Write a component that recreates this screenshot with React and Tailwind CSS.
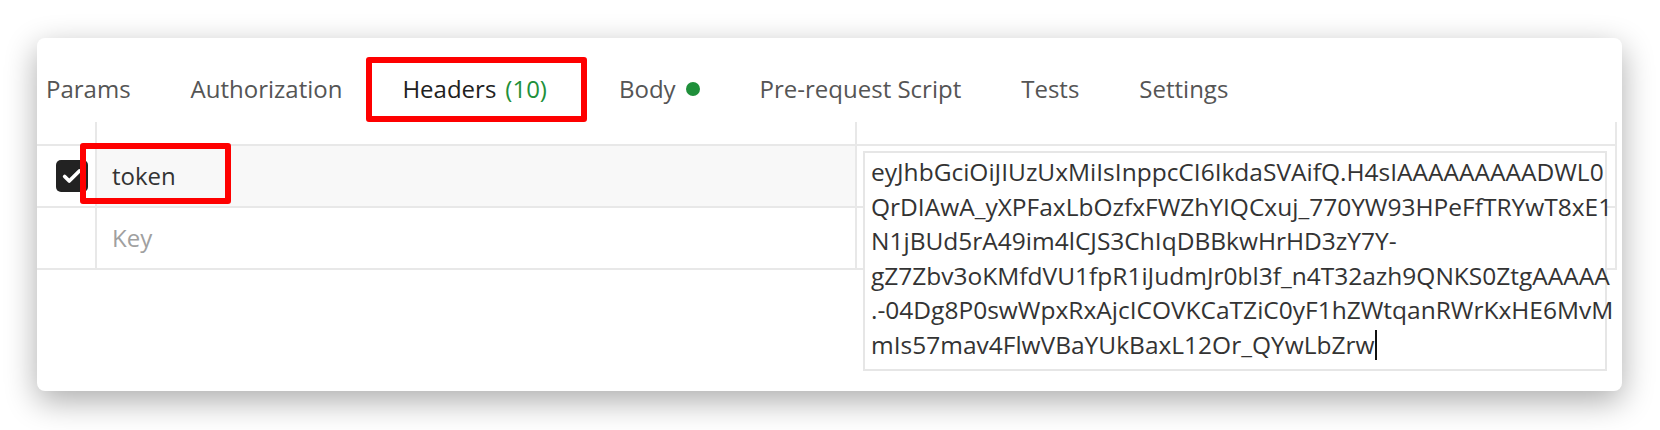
import { useState } from 'react';

const tabs = [
  { name: 'Params' },
  { name: 'Authorization' },
  { name: 'Headers', count: '(10)', active: true },
  { name: 'Body', dot: true },
  { name: 'Pre-request Script' },
  { name: 'Tests' },
  { name: 'Settings' },
];

const tokenLines = [
  'eyJhbGciOiJIUzUxMiIsInppcCI6IkdaSVAifQ.H4sIAAAAAAAAADWL0',
  'QrDIAwA_yXPFaxLbOzfxFWZhYIQCxuj_770YW93HPeFfTRYwT8xE1',
  'N1jBUd5rA49im4lCJS3ChIqDBBkwHrHD3zY7Y-',
  'gZ7Zbv3oKMfdVU1fpR1iJudmJr0bl3f_n4T32azh9QNKS0ZtgAAAAA',
  '.-04Dg8P0swWpxRxAjcICOVKCaTZiC0yF1hZWtqanRWrKxHE6MvM',
  'mIs57mav4FlwVBaYUkBaxL12Or_QYwLbZrw',
];

function Tab({ tab }) {
  return (
    <div
      className={`relative h-[60px] flex items-center pt-[2px] border-b-4 ${
        tab.active ? 'border-[#e8542c] pl-[30px] pr-[34px] mr-[8px]' : 'border-transparent px-[30px]'
      }`}
    >
      <span className={tab.active ? 'text-[#212121]' : 'text-[#555555]'}>{tab.name}</span>
      {tab.count && <span className="ml-[9px] text-[#22903a]">{tab.count}</span>}
      {tab.dot && <span className="ml-[10px] w-[14px] h-[14px] rounded-full bg-[#1f8f3a]" />}
      {/* annotation box */}
      {tab.active && (
        <div className="absolute -left-[6px] -right-[6px] -top-[3px] -bottom-[6px] border-[6px] border-[#fe0000] rounded-[3px]" />
      )}
    </div>
  );
}

function Checkbox() {
  return (
    <div className="w-[32px] h-[32px] rounded-[5px] bg-[#222222] flex items-center justify-center">
      <svg width="22" height="22" viewBox="0 0 24 24" fill="none">
        <path d="M4 12.5l5 5L20 6.5" stroke="white" strokeWidth="4" strokeLinecap="round" strokeLinejoin="round" />
      </svg>
    </div>
  );
}

export default function App() {
  const [value] = useState(tokenLines);

  return (
    <div className="h-[430px] bg-white pt-[38px] pl-[37px] font-['Open_Sans',sans-serif]">
      <div className="w-[1585px] h-[353px] bg-white rounded-[8px] shadow-[0_10px_32px_rgba(0,0,0,0.33)] overflow-hidden">
        {/* Tabs */}
        <div className="flex pt-[22px] pb-[2px] -ml-[21px] text-[24px] leading-none">
          {tabs.map((t) => (
            <Tab key={t.name} tab={t} />
          ))}
        </div>

        {/* Headers table */}
        <div className="w-[1580px]">
          <div className="flex h-[24px] border-b-2 border-[#e8e8e8]">
            <div className="w-[60px] border-r-2 border-[#e8e8e8]" />
            <div className="w-[760px] border-r-2 border-[#e8e8e8]" />
            <div className="flex-1 border-r-2 border-[#e8e8e8]" />
          </div>

          <div className="relative flex h-[62px] border-b-2 border-[#e8e8e8]">
            <div className="w-[60px] border-r-2 border-[#e8e8e8] flex items-center pl-[19px]">
              <Checkbox />
            </div>
            <div className="w-[760px] border-r-2 border-[#e8e8e8] bg-[#f8f8f8] flex items-center pl-[15px] text-[24px] text-[#333333]">
              token
            </div>
            <div className="relative flex-1 border-r-2 border-[#e8e8e8]">
              {/* expanded value editor */}
              <div className="absolute z-10 left-[6px] top-[5px] w-[744px] h-[220px] bg-white border-2 border-[#e6e6e6] pl-[6px] pt-[2px] text-[24.5px] leading-[34.6px] text-[#333333]">
                {value.map((line, i) => (
                  <div key={i} className="whitespace-nowrap flex items-center">
                    {line}
                    {i === value.length - 1 && <span className="ml-[1px] w-[2px] h-[30px] bg-[#111111]" />}
                  </div>
                ))}
              </div>
            </div>
            {/* annotation box */}
            <div className="absolute left-[43px] -top-[3px] w-[151px] h-[61px] border-[6px] border-[#fe0000] rounded-[3px]" />
          </div>

          <div className="flex h-[62px] border-b-2 border-[#e8e8e8]">
            <div className="w-[60px] border-r-2 border-[#e8e8e8]" />
            <div className="w-[760px] border-r-2 border-[#e8e8e8] flex items-center pl-[15px] text-[24px] text-[#a0a0a0]">
              Key
            </div>
            <div className="flex-1 border-r-2 border-[#e8e8e8]" />
          </div>
        </div>
      </div>
    </div>
  );
}
